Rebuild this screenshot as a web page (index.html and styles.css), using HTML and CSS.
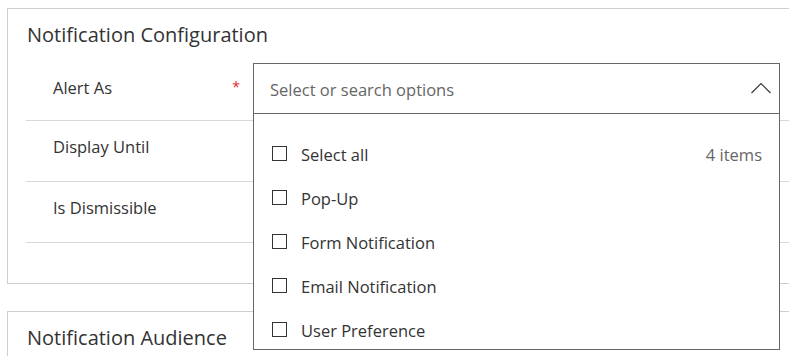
FILE: index.html
```html
<!DOCTYPE html>
<html lang="en">
<head>
    <meta charset="UTF-8">
    <meta name="viewport" content="width=device-width, initial-scale=1.0">
    <title>Notification Configuration</title>
    <link rel="stylesheet" href="styles.css">
</head>
<body>
    <div class="page">
        <section class="card">
            <h2 class="card-title">Notification Configuration</h2>

            <div class="field-row">
                <div class="field-label first">
                    <span>Alert As</span>
                    <span class="required">*</span>
                </div>
                <div class="field-control">
                    <div class="combo">
                        <span class="combo-placeholder">Select or search options</span>
                        <svg class="chevron" width="21" height="12" viewBox="0 0 21 12">
                            <polyline points="0.5,11 10,1.5 19.5,11" fill="none" stroke="#333" stroke-width="1.1"/>
                        </svg>
                    </div>

                    <!-- open options menu -->
                    <div class="options">
                        <label class="option">
                            <span class="box"></span>
                            <span class="option-text">Select all</span>
                            <span class="count">4 items</span>
                        </label>
                        <label class="option">
                            <span class="box"></span>
                            <span class="option-text">Pop-Up</span>
                        </label>
                        <label class="option">
                            <span class="box"></span>
                            <span class="option-text">Form Notification</span>
                        </label>
                        <label class="option">
                            <span class="box"></span>
                            <span class="option-text">Email Notification</span>
                        </label>
                        <label class="option">
                            <span class="box"></span>
                            <span class="option-text">User Preference</span>
                        </label>
                    </div>
                </div>
            </div>

            <div class="field-row">
                <div class="field-label"><span>Display Until</span></div>
                <div class="field-control"></div>
            </div>

            <div class="field-row">
                <div class="field-label"><span>Is Dismissible</span></div>
                <div class="field-control"></div>
            </div>
        </section>

        <section class="card">
            <h2 class="card-title">Notification Audience</h2>
        </section>
    </div>
</body>
</html>
```

FILE: styles.css
```css
html, body {
    margin: 0;
    overflow: hidden;
}
body {
    font-family: "Open Sans", "Noto Sans", Arial, sans-serif;
    font-size: 16.5px;
    color: #333;
    background-color: #fff;
}
.page {
    padding: 8px 0 0 7px;
    width: 1100px;
}
.card {
    border: 1px solid #cfcfcf;
    padding: 0 18px 40px 18px;
    margin-bottom: 27px;
}
.card-title {
    margin: 0;
    padding: 13px 0 12px 1px;
    font-size: 20px;
    line-height: 26px;
    font-weight: 400;
    color: #333;
}
.field-row {
    display: flex;
    align-items: flex-start;
    padding: 3px 0 6px 27px;
    border-bottom: 1px solid #d8d8d8;
}
.field-label {
    width: 200px;
    display: flex;
    justify-content: space-between;
    padding: 12px 13px 0 0;
    box-sizing: border-box;
    line-height: 22px;
}
.field-label.first {
    padding-top: 14px;
}
.required {
    color: #e8242f;
    font-size: 14px;
    line-height: 18px;
    padding-top: 1px;
}
.field-control {
    position: relative;
    width: 527px;
    height: 51px;
}
.combo {
    display: flex;
    align-items: center;
    justify-content: space-between;
    height: 51px;
    box-sizing: border-box;
    border: 1px solid #666;
    padding: 1px 7px 0 16px;
    background: #fff;
}
.combo-placeholder {
    color: #666;
}
.chevron {
    display: block;
    margin-top: -3px;
}
.options {
    position: absolute;
    top: 51px;
    left: 0;
    width: 527px;
    height: 236px;
    box-sizing: border-box;
    border: 1px solid #666;
    border-top: none;
    background: #fff;
    padding: 18px 17px 0 18px;
    overflow: hidden;
    z-index: 2;
}
.option {
    display: flex;
    align-items: center;
    height: 44px;
}
.box {
    width: 15px;
    height: 15px;
    box-sizing: border-box;
    border: 1px solid #333;
    margin-right: 14px;
    margin-top: -2px;
}
.option-text {
    flex: 1;
}
.count {
    color: #666;
}
```
